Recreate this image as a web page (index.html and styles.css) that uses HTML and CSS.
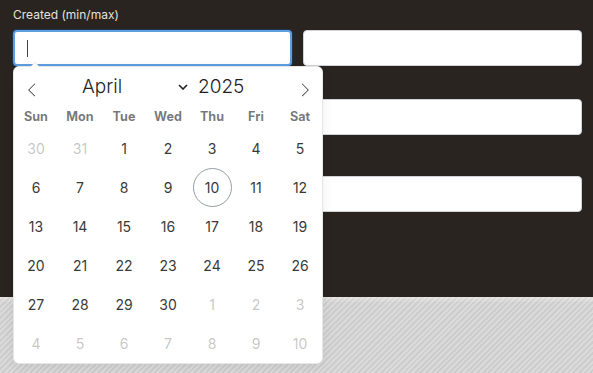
FILE: index.html
```html
<!DOCTYPE html>
<html>
<head>
<meta charset="utf-8">
<link rel="stylesheet" href="styles.css">
</head>
<body>
<div class="page">
  <div class="panel">
    <div class="field">
      <div class="label">Created (min/max)</div>
      <div class="pair">
        <div class="input focus"><span class="caret"></span></div>
        <div class="input"></div>
      </div>
    </div>
    <div class="field second">
      <div class="input"></div>
    </div>
    <div class="field third">
      <div class="input"></div>
    </div>
  </div>
  <div class="stripes"></div>

  <div class="calendar">
    <div class="months">
      <span class="nav prev"><svg viewBox="0 0 17 17" width="14" height="14"><path d="M5.207 8.471l7.146 7.147-0.707 0.707-7.853-7.854 7.854-7.853 0.707 0.707-7.147 7.146z"/></svg></span>
      <div class="current">
        <span class="month">April</span>
        <svg class="chev" viewBox="0 0 10 6" width="10" height="6"><path d="M1 1l4 4 4-4" fill="none" stroke="#222" stroke-width="1.6"/></svg>
        <span class="year">2025</span>
      </div>
      <span class="nav next"><svg viewBox="0 0 17 17" width="14" height="14"><path d="M13.207 8.472l-7.854 7.854-0.707-0.707 7.146-7.146-7.146-7.148 0.707-0.707 7.854 7.854z"/></svg></span>
    </div>
    <div class="weekdays">
      <span>Sun</span><span>Mon</span><span>Tue</span><span>Wed</span><span>Thu</span><span>Fri</span><span>Sat</span>
    </div>
    <div class="days">
      <span class="other">30</span><span class="other">31</span><span>1</span><span>2</span><span>3</span><span>4</span><span>5</span>
      <span>6</span><span>7</span><span>8</span><span>9</span><span class="today">10</span><span>11</span><span>12</span>
      <span>13</span><span>14</span><span>15</span><span>16</span><span>17</span><span>18</span><span>19</span>
      <span>20</span><span>21</span><span>22</span><span>23</span><span>24</span><span>25</span><span>26</span>
      <span>27</span><span>28</span><span>29</span><span>30</span><span class="other">1</span><span class="other">2</span><span class="other">3</span>
      <span class="other">4</span><span class="other">5</span><span class="other">6</span><span class="other">7</span><span class="other">8</span><span class="other">9</span><span class="other">10</span>
    </div>
  </div>
</div>
</body>
</html>
```
FILE: styles.css
```css
* { box-sizing: border-box; }
html, body { margin: 0; padding: 0; }
body {
  font-family: Inter, "Noto Sans", "DejaVu Sans", sans-serif;
  width: 593px;
  height: 373px;
  overflow: hidden;
  background: #d6d6d6;
}
.page {
  position: relative;
  width: 593px;
  height: 373px;
}
.panel {
  background: #29241f;
  height: 297px;
  padding: 7px 11px 0 13px;
}
.label {
  color: #e4e2df;
  font-size: 12px;
  line-height: 16px;
  margin-bottom: 7px;
}
.pair {
  display: grid;
  grid-template-columns: minmax(0, 1fr) minmax(0, 1fr);
  gap: 11px;
}
.input {
  height: 36px;
  background: #fff;
  border: 1px solid #cfd3d8;
  border-radius: 4px;
  position: relative;
}
.input.focus {
  border: 2px solid #5d9de0;
  box-shadow: 0 0 0 1px #1e3550;
  padding-left: 12px;
  display: flex;
  align-items: center;
}
.caret {
  display: block;
  width: 1px;
  height: 17px;
  background: #444;
}
.second { margin-top: 33px; }
.third { margin-top: 41px; }
.stripes {
  height: 76px;
  background:
    linear-gradient(to bottom, rgba(255,255,255,0.35), rgba(255,255,255,0) 6px),
    repeating-linear-gradient(135deg, #dadada 0 2px, #cdcdcd 2px 4px);
}

.calendar {
  position: absolute;
  left: 14px;
  top: 67px;
  width: 308px;
  background: #fff;
  border-radius: 5px;
  box-shadow: 1px 0 0 #e6e6e6, -1px 0 0 #e6e6e6, 0 1px 0 #e6e6e6, 0 -1px 0 #e6e6e6, 0 3px 13px rgba(0,0,0,0.08);
}
.calendar::before,
.calendar::after {
  content: "";
  position: absolute;
  left: 21px;
  width: 0;
  height: 0;
  border: solid transparent;
}
.calendar::before {
  border-width: 5px;
  margin-left: -5px;
  bottom: 100%;
  border-bottom-color: #e6e6e6;
}
.calendar::after {
  border-width: 4px;
  margin-left: -4px;
  bottom: 100%;
  border-bottom-color: #fff;
}
.months {
  height: 34px;
  position: relative;
}
.nav {
  position: absolute;
  top: 16px;
  width: 14px;
  height: 14px;
}
.nav svg { display: block; fill: #444; }
.prev { left: 11px; }
.next { right: 10px; }
.current {
  position: absolute;
  left: 0;
  right: 0;
  top: 9px;
  display: flex;
  align-items: center;
  color: #222;
  font-size: 19px;
  font-weight: 300;
  line-height: 22px;
}
.month { margin-left: 68px; width: 96px; }
.chev { display: block; }
.year { margin-left: 10px; }
.weekdays {
  display: grid;
  grid-template-columns: repeat(7, 44px);
  height: 28px;
  align-items: center;
  text-align: center;
  font-size: 12.6px;
  font-weight: 700;
  color: rgba(0,0,0,0.54);
  padding-top: 2px;
}
.days {
  display: grid;
  grid-template-columns: repeat(7, 44px);
  grid-auto-rows: 39px;
  font-size: 14px;
  color: #393939;
}
.days span {
  display: flex;
  align-items: center;
  justify-content: center;
  margin: 0 2.5px;
  border-radius: 50%;
  border: 1px solid transparent;
}
.days .other { color: rgba(57,57,57,0.3); }
.days .today { border-color: #959ea9; }
```
